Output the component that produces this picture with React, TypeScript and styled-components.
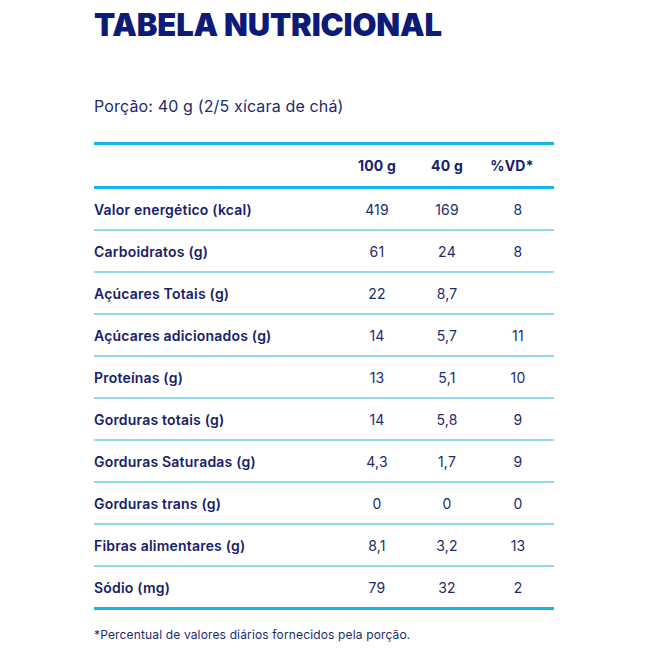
import React from "react";
import styled, { createGlobalStyle } from "styled-components";

const GlobalStyle = createGlobalStyle`
  html, body {
    margin: 0;
    padding: 0;
    background: #ffffff;
  }
  body {
    font-family: Inter, "Noto Sans", "Liberation Sans", sans-serif;
    color: #1a2569;
  }
`;

const StyledPage = styled.div`
  width: 660px;
  height: 660px;
  box-sizing: border-box;
  padding: 8px 0 0 94px;
`;

const StyledTitle = styled.h1`
  margin: 0;
  font-size: 31px;
  line-height: 34px;
  font-weight: 900;
  color: #0c1a78;
  letter-spacing: -0.15px;
`;

const StyledPortion = styled.p`
  margin: 54px 0 0;
  font-size: 16px;
  line-height: 20px;
  font-weight: 400;
  color: #1d2a6e;
  letter-spacing: 0.15px;
`;

const StyledTable = styled.div`
  width: 460px;
  margin-top: 26px;
  border-top: 3px solid #15b6e6;
  border-bottom: 3px solid #15b6e6;
`;

const StyledRow = styled.div<{ $header?: boolean }>`
  display: grid;
  grid-template-columns: 1fr 70px 70px 72px;
  align-items: center;
  height: ${(p) => (p.$header ? "41px" : "40px")};
  border-bottom: ${(p) => (p.$header ? "3px solid #15b6e6" : "2px solid #8fd9f2")};

  &:last-child {
    border-bottom: none;
  }
`;

const StyledLabel = styled.div`
  font-size: 14px;
  font-weight: 600;
  color: #16216a;
  letter-spacing: 0.2px;
`;

const StyledValue = styled.div<{ $bold?: boolean; $shift?: number }>`
  text-align: center;
  font-size: 14px;
  font-weight: ${(p) => (p.$bold ? 700 : 400)};
  color: ${(p) => (p.$bold ? "#16216a" : "#1d2a6e")};
  letter-spacing: 0.2px;
  padding-right: ${(p) => p.$shift ?? 0}px;
`;

const StyledNote = styled.p`
  margin: 17px 0 0;
  font-size: 12px;
  line-height: 16px;
  color: #1d2a6e;
  letter-spacing: 0.15px;
`;

const rows: [string, string, string, string][] = [
  ["Valor energético (kcal)", "419", "169", "8"],
  ["Carboidratos (g)", "61", "24", "8"],
  ["Açúcares Totais (g)", "22", "8,7", ""],
  ["Açúcares adicionados (g)", "14", "5,7", "11"],
  ["Proteínas (g)", "13", "5,1", "10"],
  ["Gorduras totais (g)", "14", "5,8", "9"],
  ["Gorduras Saturadas (g)", "4,3", "1,7", "9"],
  ["Gorduras trans (g)", "0", "0", "0"],
  ["Fibras alimentares (g)", "8,1", "3,2", "13"],
  ["Sódio (mg)", "79", "32", "2"],
];

export default function App() {
  return (
    <>
      <GlobalStyle />
      <StyledPage>
        <StyledTitle>TABELA NUTRICIONAL</StyledTitle>
        <StyledPortion>Porção: 40 g (2/5 xícara de chá)</StyledPortion>
        <StyledTable>
          <StyledRow $header>
            <div />
            <StyledValue $bold>100 g</StyledValue>
            <StyledValue $bold>40 g</StyledValue>
            <StyledValue $bold $shift={12}>%VD*</StyledValue>
          </StyledRow>
          {rows.map(([label, a, b, c]) => (
            <StyledRow key={label}>
              <StyledLabel>{label}</StyledLabel>
              <StyledValue>{a}</StyledValue>
              <StyledValue>{b}</StyledValue>
              <StyledValue>{c}</StyledValue>
            </StyledRow>
          ))}
        </StyledTable>
        <StyledNote>*Percentual de valores diários fornecidos pela porção.</StyledNote>
      </StyledPage>
    </>
  );
}
